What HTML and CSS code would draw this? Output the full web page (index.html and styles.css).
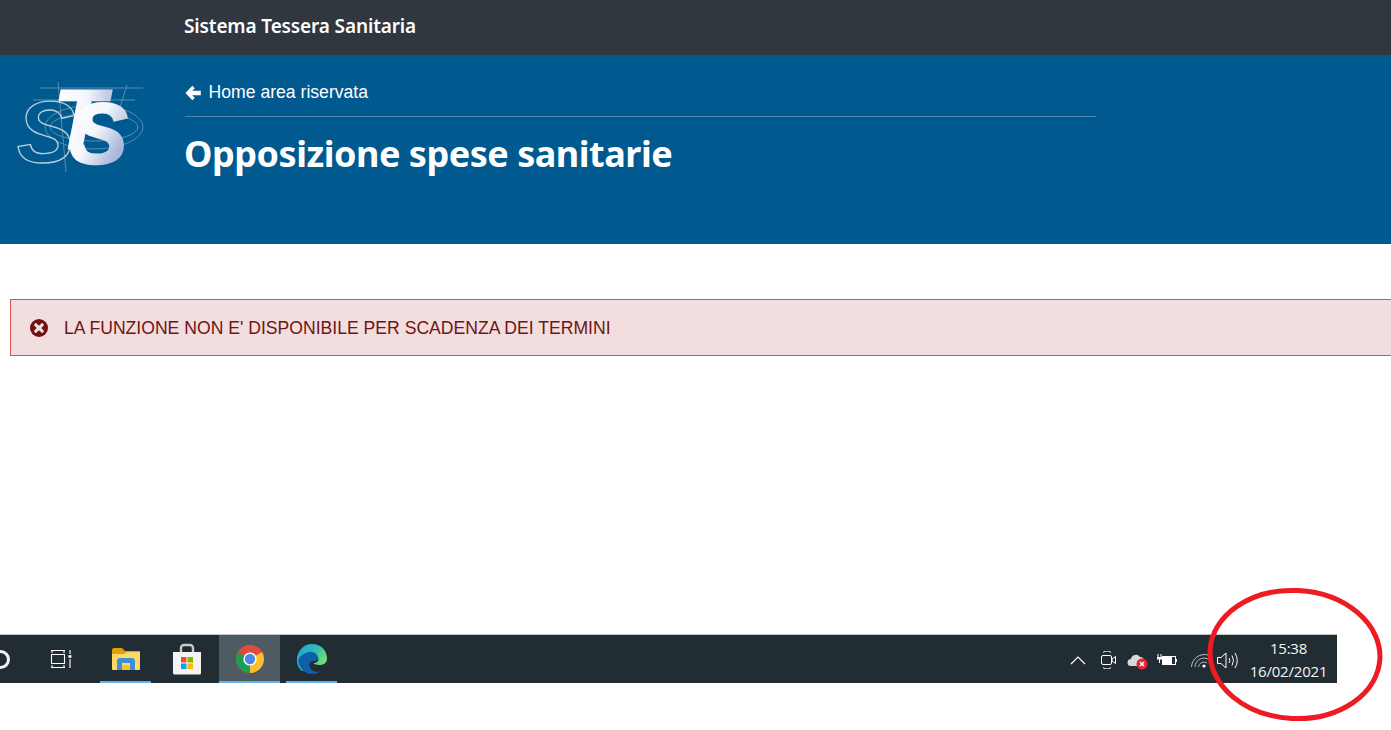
FILE: index.html
```html
<!DOCTYPE html>
<html lang="it">
<head>
<meta charset="utf-8">
<title>Opposizione spese sanitarie</title>
<link rel="stylesheet" href="styles.css">
</head>
<body>
<div class="page">
  <header class="topbar"><span class="topbar-title">Sistema Tessera Sanitaria</span></header>
  <section class="hero">
    <svg class="logo" viewBox="0 0 130 92" width="130" height="92" aria-label="STS">
      <defs>
        <linearGradient id="lg" gradientUnits="userSpaceOnUse" x1="55" y1="30" x2="108" y2="60">
          <stop offset="0" stop-color="#ffffff"/><stop offset="0.5" stop-color="#f4f6fb"/><stop offset="1" stop-color="#a9b8da"/>
        </linearGradient>
        <linearGradient id="lt" gradientUnits="userSpaceOnUse" x1="40" y1="10" x2="92" y2="10">
          <stop offset="0" stop-color="#ffffff"/><stop offset="0.6" stop-color="#f2f5fb"/><stop offset="1" stop-color="#c0cce6"/>
        </linearGradient>
      </defs>
      <g fill="none" stroke="#6d9aba" stroke-width="1" opacity="0.8">
        <path d="M24 7H127M17 19H119M42 1L50 91M111 4L104 26"/>
        <ellipse cx="78" cy="46" rx="49" ry="22"/>
        <ellipse cx="78" cy="46" rx="44" ry="14"/>
      </g>
      <text class="logo-s1" x="1" y="81">S</text>
      <text class="logo-t" x="38" y="67" fill="url(#lt)" stroke="url(#lt)">T</text>
      <text class="logo-s2" x="54" y="82" fill="url(#lg)" stroke="url(#lg)">S</text>
    </svg>
    <div class="hero-body">
      <a class="back" href="#">
        <svg class="back-icon" viewBox="0 0 16 16" width="16" height="16"><path d="M7.400 0.800 L0.400 8 L7.400 15.200 L9.800 12.800 L7.200 10.200 H15.800 V5.800 H7.200 L9.800 3.200 Z" fill="#fff"/></svg>
        <span>Home area riservata</span>
      </a>
      <h1 class="title">Opposizione spese sanitarie</h1>
    </div>
  </section>
  <div class="alert">
    <svg class="alert-icon" viewBox="0 0 18 18" width="18" height="18"><circle cx="9" cy="9" r="9" fill="#701010"/><path d="M5.800 5.800 12.200 12.200M12.200 5.800 5.800 12.200" stroke="#f2dede" stroke-width="3.200" stroke-linecap="round"/></svg>
    <span>LA FUNZIONE NON E' DISPONIBILE PER SCADENZA DEI TERMINI</span>
  </div>
  <footer class="taskbar">
    <span class="cortana"></span>
    <svg class="taskview" viewBox="0 0 22 20" width="22" height="20"><path d="M1 1.500H15M1 18.500H15M2 1V4M14 1V4M2 16V19M14 16V19M1.500 5.500H14.500V14.500H1.500ZM20 1V5M20 10V19" fill="none" stroke="#fff" stroke-width="1.100"/><rect x="18.400" y="6.200" width="3" height="2.600" fill="#fff"/></svg>
    <div class="slot running">
      <svg viewBox="0 0 28 24" width="28" height="24"><path d="M0 3a2 2 0 0 1 2-2h8l3 3h15v4H0Z" fill="#e0a008"/><path d="M0 7h12l3-2h13v17a1 1 0 0 1-1 1H1a1 1 0 0 1-1-1Z" fill="#ffd968"/><path d="M5 23V14a3 3 0 0 1 3-3h12a3 3 0 0 1 3 3v9h-5v-7h-8v7Z" fill="#3f8fd6"/><rect x="10" y="18" width="8" height="5" fill="#f7c531"/></svg>
    </div>
    <div class="slot">
      <svg viewBox="0 0 30 32" width="30" height="32"><path d="M9 9V5a3 3 0 0 1 3-3h6a3 3 0 0 1 3 3v4" fill="none" stroke="#c8c8c8" stroke-width="2.400"/><path d="M1 9h28v21a1.500 1.500 0 0 1-1.500 1.500H2.500A1.500 1.500 0 0 1 1 30Z" fill="#f4f4f4"/><rect x="9" y="14" width="5.500" height="5.500" fill="#f25022"/><rect x="15.500" y="14" width="5.500" height="5.500" fill="#7fba00"/><rect x="9" y="20.500" width="5.500" height="5.500" fill="#00a4ef"/><rect x="15.500" y="20.500" width="5.500" height="5.500" fill="#ffb900"/></svg>
    </div>
    <div class="slot active">
      <svg viewBox="0 0 28 28" width="28" height="28"><circle cx="14" cy="14" r="14" fill="#dd4b3e"/><path d="M14 14 26.100 7A14 14 0 0 1 14 28Z" fill="#fbc02d"/><path d="M14 14 14 28A14 14 0 0 1 1.900 7Z" fill="#1b9e55"/><path d="M1.900 7A14 14 0 0 1 26.100 7H14Z" fill="#dd4b3e"/><circle cx="14" cy="14" r="6.600" fill="#fff"/><circle cx="14" cy="14" r="5.200" fill="#4e86ec"/></svg>
    </div>
    <div class="slot running edge-slot">
      <svg viewBox="0 0 30 30" width="30" height="30"><defs><linearGradient id="eg" x1="0" y1="0" x2="1" y2="0.6"><stop offset="0" stop-color="#1b9de2"/><stop offset="0.6" stop-color="#35c1b0"/><stop offset="1" stop-color="#7ee06a"/></linearGradient></defs><path d="M15 0C24 0 30 6.500 30 14.500 30 19 26.500 21 22.500 21 19 21 17 20 16.500 19 21 19 22 16 21 13.500 19.500 9.500 14 8 10 10.500 4 14 4 22 9 26 10 27 2 30 0 18 -1 8 6 0 15 0Z" fill="url(#eg)"/><path d="M9 9C14 6 21 9 21 14 21 16 19 17 17 17 14 17 11.500 19 12.500 22.500 14 27 20 30 25 26 21.500 29.500 17.500 30 15 30 7 30 1.500 23 1.500 17 1.500 13 5 10 9 9Z" fill="#0f5fa8"/></svg>
    </div>
    <div class="tray">
      <svg class="tray-chevron" viewBox="0 0 16 10" width="16" height="10"><path d="M1 9 8 2 15 9" fill="none" stroke="#fff" stroke-width="1.200"/></svg>
      <svg class="tray-cam" viewBox="0 0 15 18" width="15" height="18"><path d="M2 1.500A6 6 0 0 1 10 1.500M2 16.500A6 6 0 0 0 10 16.500" fill="none" stroke="#fff"/><rect x="0.500" y="4.500" width="10" height="9" rx="1.500" fill="none" stroke="#fff"/><path d="M11 8 14.500 5.500V12.500L11 10Z" fill="none" stroke="#fff"/></svg>
      <svg class="tray-cloud" viewBox="0 0 21 17" width="21" height="17"><path d="M4 13a3.500 3.500 0 0 1 0-7 5 5 0 0 1 9-2 4 4 0 0 1 4 4v5Z" fill="#d8d8d8"/><circle cx="15" cy="11" r="5.500" fill="#e22634"/><path d="M13 9 17 13M17 9 13 13" stroke="#fff" stroke-width="1.400"/></svg>
      <svg class="tray-batt" viewBox="0 0 20 12" width="20" height="12"><path d="M1 0V3M4 0V3" stroke="#fff"/><path d="M0 3H5V5.500H3V9H2V5.500H0Z" fill="#fff"/><rect x="5.500" y="2.500" width="13" height="8" fill="none" stroke="#fff"/><rect x="5.500" y="2.500" width="9.500" height="8" fill="#fff"/><rect x="18.500" y="5" width="1.500" height="3" fill="#fff"/></svg>
      <svg class="tray-wifi" viewBox="0 0 18 15" width="18" height="15"><g fill="none" stroke="#b9bdc0" stroke-width="1"><path d="M0.500 14A13 13 0 0 1 17 2"/><path d="M4 14A9 9 0 0 1 17 6"/><path d="M7.500 14A5.500 5.500 0 0 1 16 10"/></g><circle cx="13" cy="13" r="1.600" fill="#fff"/></svg>
      <svg class="tray-vol" viewBox="0 0 21 17" width="21" height="17"><path d="M0.500 5.500H4L9 1V16L4 11.500H0.500Z M12 6Q14 8.500 12 11M15 3.500Q18 8.500 15 13.500M18 1Q22.500 8.500 18 16" fill="none" stroke="#fff"/></svg>
      <div class="clock"><span>15:38</span><span>16/02/2021</span></div>
    </div>
  </footer>
  <svg class="annotation" viewBox="0 0 190 145" width="190" height="145"><ellipse cx="95" cy="72.500" rx="85" ry="64" transform="rotate(3 95 72.500)" fill="none" stroke="#ed1c24" stroke-width="5"/></svg>
</div>
</body>
</html>
```
FILE: styles.css
```css
* { box-sizing: border-box; }
html, body { margin: 0; padding: 0; background: #fff; }
.page { position: relative; width: 1391px; height: 730px; overflow: hidden; display: flex; flex-direction: column; font-family: "Liberation Sans", Arial, sans-serif; }

.topbar { flex: none; height: 55px; background: #30373f; display: flex; align-items: center; padding: 0 0 4px 184px; }
.topbar-title { font-family: "Noto Sans", sans-serif; font-weight: 600; font-size: 19px; color: #fff; letter-spacing: -0.130px; }

.hero { flex: none; height: 189px; background: #005a8f; display: flex; align-items: flex-start; padding-left: 16px; }
.logo { flex: none; margin-top: 26px; overflow: visible; }
.logo-s1 { font: italic 700 87px "Liberation Sans", sans-serif; fill: none; stroke: #b9cfe0; stroke-width: 1.300px; }
.logo-t { font: italic 700 84px "Liberation Sans", sans-serif; stroke-width: 2.500px; }
.logo-s2 { font: italic 700 86px "Liberation Sans", sans-serif; stroke-width: 2.500px; }
.hero-body { flex: none; width: 911px; margin-left: 39px; padding-top: 26px; }
.back { display: flex; align-items: center; gap: 8px; height: 23px; color: #fff; text-decoration: none; font-size: 17.600px; box-sizing: content-box; padding-bottom: 12px; border-bottom: 1px solid #5187ab; }
.back-icon { flex: none; margin-left: -0.400px; }
.title { margin: 12px 0 0 -1px; font-family: "Noto Sans", sans-serif; font-weight: 700; font-size: 36px; line-height: 50px; color: #fff; letter-spacing: -0.480px; }

.alert { flex: none; width: 1420px; height: 57px; margin: 55px 0 0 10px; padding-left: 19px; display: flex; align-items: center; gap: 16px; background: #f2dede; border: 1px solid #d9534f; color: #701414; font-size: 17.600px; }
.alert-icon { flex: none; }
.alert span { padding-top: 1px; }

.taskbar { flex: none; width: 1337px; height: 49px; margin-top: 278px; display: flex; align-items: center; background: #212d33; border-top: 1px solid #c4c4c4; color: #fff; }
.cortana { flex: none; width: 19px; height: 19px; margin-left: -9px; border: 3px solid #f2f2f2; border-radius: 50%; }
.taskview { flex: none; margin-left: 40px; }
.slot { flex: none; width: 51px; height: 48px; padding-top: 2px; margin-left: 10px; display: flex; align-items: center; justify-content: center; border-bottom: 2px solid transparent; }
.slot.running { border-bottom-color: #63b1ea; }
.slot.active { width: 61px; margin-left: 7px; background: #4e5b62; border-bottom-color: #63b1ea; }
.taskview + .slot { margin-left: 28px; }
.edge-slot { margin-left: 6px; }
.tray { margin-left: auto; display: flex; align-items: center; height: 48px; padding-top: 2px; }
.tray-chevron { margin-right: 15px; }
.tray-cam { margin-right: 11px; }
.tray-cloud { margin-right: 9px; margin-top: 2px; }
.tray-batt { margin-right: 14px; }
.tray-wifi { margin-right: 8px; margin-top: 1px; }
.tray-vol { margin-right: 12px; }
.clock { width: 77px; margin: -2px 10px 0 0; display: flex; flex-direction: column; align-items: center; gap: 3px; font-family: "Open Sans", sans-serif; font-size: 15px; line-height: 20px; color: #f4f4f4; letter-spacing: -0.200px; }

.annotation { position: absolute; left: 1200px; top: 582px; pointer-events: none; }
```
